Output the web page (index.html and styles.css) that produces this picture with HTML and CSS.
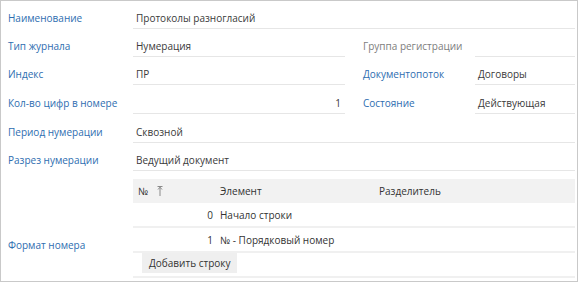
FILE: index.html
```html
<!DOCTYPE html>
<html lang="ru">
<head>
<meta charset="utf-8">
<link rel="stylesheet" href="styles.css">
</head>
<body>
<div class="frame">
  <div class="form">
    <div class="lbl">Наименование</div>
    <div class="val span4">Протоколы разногласий</div>

    <div class="lbl">Тип журнала</div>
    <div class="val">Нумерация</div>
    <div class="lbl2 muted">Группа регистрации</div>
    <div class="val"></div>

    <div class="lbl">Индекс</div>
    <div class="val">ПР</div>
    <div class="lbl2">Документопоток</div>
    <div class="val">Договоры</div>

    <div class="lbl">Кол-во цифр в номере</div>
    <div class="val num">1</div>
    <div class="lbl2">Состояние</div>
    <div class="val">Действующая</div>

    <div class="lbl">Период нумерации</div>
    <div class="val span4">Сквозной</div>

    <div class="lbl">Разрез нумерации</div>
    <div class="val span4">Ведущий документ</div>

    <div class="lbl lbl-table">Формат номера</div>
    <div class="tablewrap span4">
      <div class="trow thead">
        <div class="c1 hnum">№ <svg class="sort" width="6" height="10" viewBox="0 0 6 10"><path d="M0.5 0.5H5.5M3 1V10M1 3.5L3 1.2L5 3.5" fill="none" stroke="#8a8a8a" stroke-width="1"/></svg></div>
        <div class="c2">Элемент</div>
        <div class="c3">Разделитель</div>
      </div>
      <div class="trow">
        <div class="c1 rnum">0</div>
        <div class="c2">Начало строки</div>
        <div class="c3"></div>
      </div>
      <div class="trow">
        <div class="c1 rnum">1</div>
        <div class="c2">№ - Порядковый номер</div>
        <div class="c3"></div>
      </div>
      <div class="trow btnrow">
        <button class="btn">Добавить строку</button>
      </div>
    </div>
  </div>
</div>
</body>
</html>
```

FILE: styles.css
```css
html, body {
  margin: 0;
  padding: 0;
  background: #ffffff;
}
body {
  font-family: "Open Sans", "Noto Sans", sans-serif;
  font-size: 10px;
  color: #333333;
}
.frame {
  width: 576px;
  height: 280px;
  border: 1px solid #c9c9c9;
  border-right-width: 2px;
  border-bottom-width: 2px;
  box-sizing: content-box;
  overflow: hidden;
}
.form {
  display: grid;
  grid-template-columns: 125px 212px 18px 112px 100px;
  grid-template-rows: 28px 28px 29px 29px 28px 28px auto;
  padding: 8px 0 0 7px;
  align-items: start;
}
.lbl {
  grid-column: 1;
  color: #2e6db0;
  line-height: 19px;
  height: 19px;
  white-space: nowrap;
}
.lbl2 {
  grid-column: 4;
  color: #2e6db0;
  line-height: 19px;
  height: 19px;
  white-space: nowrap;
}
.muted {
  color: #7d7d7d;
}
.val {
  height: 19px;
  line-height: 19px;
  padding: 0 3px;
  border-bottom: 1px solid #e6e6e6;
  white-space: nowrap;
  color: #3a3a3a;
}
.span4 {
  grid-column: 2 / 6;
}
.num {
  text-align: right;
  padding-right: 4px;
}
.lbl-table {
  grid-row: 7;
  align-self: end;
  margin-bottom: 21px;
}
.tablewrap {
  grid-row: 7;
  height: 97px;
}
.trow {
  display: flex;
  height: 23px;
  align-items: center;
  border-bottom: 2px solid #f0f0f0;
}
.thead {
  background: #f2f2f2;
  border-bottom: none;
  height: 24px;
}
.c1 {
  width: 84px;
  box-sizing: border-box;
  padding: 0 4px 0 5px;
}
.c2 {
  width: 159px;
  box-sizing: border-box;
  padding-left: 3px;
}
.c3 {
  flex: 1;
  padding-left: 3px;
}
.hnum {
  display: flex;
  align-items: center;
  gap: 9px;
}
.sort {
  display: block;
}
.rnum {
  text-align: right;
}
.btnrow {
  height: 23px;
  align-items: flex-start;
  padding-left: 9px;
}
.btn {
  font: inherit;
  color: #333333;
  background: #efefef;
  border: none;
  height: 20px;
  padding: 0 7px;
  margin: 0;
  line-height: 20px;
}
```
